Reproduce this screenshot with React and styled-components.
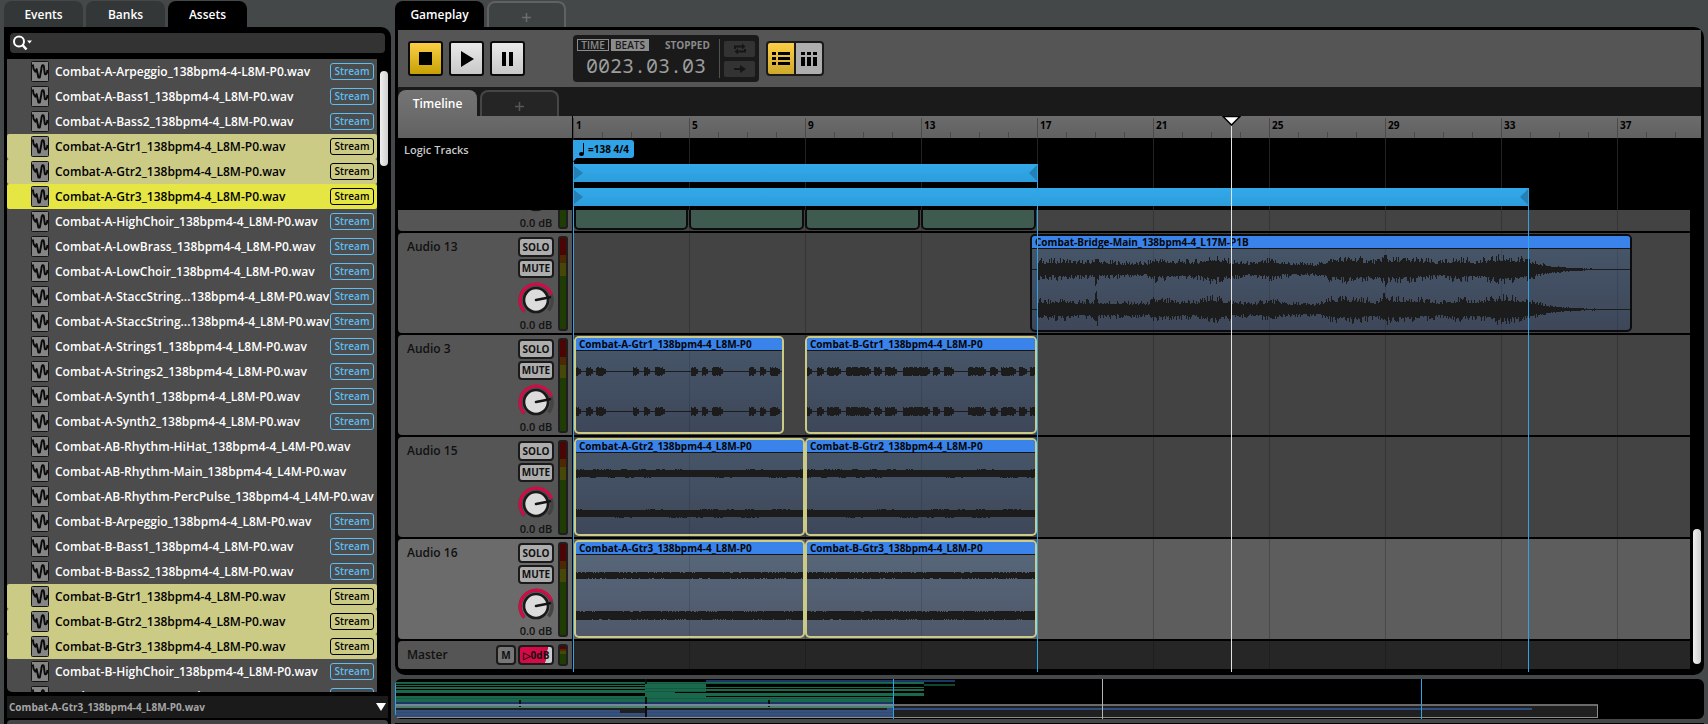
import React, { useState } from 'react';
import styled, { createGlobalStyle, css } from 'styled-components';

const COLORS = {
  frame: '#444848',
  black: '#000',
  panel: '#555',
  dark: '#1a1a1a',
  list: '#4c4c4c',
  lane: '#434343',
  laneSelected: '#5d5d5d',
  blue: '#2fa3e6',
  stream: '#5bbff5',
  clip: '#3a83ea',
  picked: '#cccb85',
  current: '#e5e544',
  red: '#d60a47',
  white: '#fff',
};
const SIZES = {
  small: '10px',
  medium: '11px',
  large: '12px',
};
const BAR = 29;
const FONT = `'Open Sans', 'Noto Sans', sans-serif`;

const GlobalStyle = createGlobalStyle`
  * {
    box-sizing: border-box;
  }
  body {
    margin: 0;
    background: ${COLORS.frame};
    font-family: ${FONT};
    font-size: ${SIZES.large};
    font-weight: 700;
  }
  button, input {
    font: inherit;
    margin: 0;
    padding: 0;
  }
`;

const Window = styled.div`
  display: flex;
  gap: 4px;
  height: 100vh;
  padding: 0 4px;
  overflow: hidden;
`;
const Column = styled.div`
  display: flex;
  flex-direction: column;
  min-width: 0;
  ${(props) => (props.$side ? 'flex: 0 0 387px;' : 'flex: 1;')}
`;
const TabBar = styled.div`
  display: flex;
  flex: none;
  gap: 3px;
  padding-top: ${(props) => (props.$inner ? '3px' : '1px')};
  background: ${(props) => (props.$inner ? COLORS.dark : 'transparent')};
`;
const Tab = styled.button`
  width: ${(props) => (props.$wide ? '89px' : '79px')};
  height: 26px;
  border: 0;
  border-radius: 8px 8px 0 0;
  color: ${COLORS.white};
  font-size: ${SIZES.large};
  font-weight: 600;
  background: ${(props) => (props.$active ? COLORS.black : '#333737')};
  ${(props) =>
    props.$inner &&
    css`
      background: linear-gradient(#747474, #6b6b6b);
    `}
`;
const AddTab = styled.button`
  width: 79px;
  height: 26px;
  border: 2px solid ${(props) => (props.$inner ? '#464646' : '#606161')};
  border-bottom: 0;
  border-radius: 8px 8px 0 0;
  background: ${(props) => (props.$inner ? '#252525' : '#3e4242')};
  svg {
    display: block;
    margin: 4px auto 0;
  }
`;

/* asset browser */
const Browser = styled.div`
  display: flex;
  flex-direction: column;
  flex: 1;
  min-height: 0;
  padding: 6px 3px 0;
  background: ${COLORS.black};
  border-radius: 0 10px 0 0;
`;
const Search = styled.label`
  display: flex;
  align-items: center;
  flex: none;
  height: 20px;
  margin: 0 3px 6px;
  padding-left: 3px;
  background: #333;
  border-radius: 4px;
  input {
    flex: 1;
    border: 0;
    outline: 0;
    background: none;
    color: ${COLORS.white};
  }
`;
const ListArea = styled.div`
  display: flex;
  gap: 3px;
  flex: 1;
  min-height: 0;
`;
const AssetList = styled.ul`
  flex: 1;
  margin: 0;
  padding: 0;
  list-style: none;
  overflow: hidden;
  background: ${COLORS.list};
  border-radius: 0 0 0 5px;
`;
const Asset = styled.li`
  display: flex;
  align-items: center;
  height: 25px;
  padding: 0 3px 0 24px;
  color: ${(props) => (props.$state ? COLORS.black : COLORS.white)};
  background: ${(props) => (props.$state ? COLORS[props.$state] : 'transparent')};
  border-radius: 2px;
  font-weight: 600;
  svg {
    flex: none;
  }
`;
const AssetName = styled.span`
  flex: 1;
  margin-left: 6px;
  white-space: nowrap;
`;
const Stream = styled.span`
  flex: none;
  width: 44px;
  height: 17px;
  border: 1px solid;
  border-radius: 3px;
  color: ${(props) => (props.$state ? COLORS.black : COLORS.stream)};
  font-size: ${SIZES.small};
  line-height: 15px;
  text-align: center;
`;
const ScrollTrack = styled.div`
  display: flex;
  flex-direction: column;
  flex: none;
  width: 8px;
  padding-top: 12px;
  ${(props) =>
    props.$end &&
    css`
      justify-content: flex-end;
      padding: 0 0 5px;
    `}
`;
const Thumb = styled.div`
  width: 8px;
  height: ${(props) => props.$size};
  border-radius: 4px;
  background: linear-gradient(90deg, #f0f0f0, #cfcfcf);
`;
const Preview = styled.div`
  display: flex;
  align-items: center;
  justify-content: space-between;
  flex: none;
  height: 22px;
  margin-top: 4px;
  padding: 0 2px;
  background: ${COLORS.dark};
  color: #a5a5a5;
  font-size: ${SIZES.small};
`;
const NextPanel = styled.div`
  flex: none;
  height: 4px;
  margin-top: 2px;
  background: #444;
  border-radius: 4px 4px 0 0;
`;

/* editor */
const Editor = styled.div`
  display: flex;
  flex-direction: column;
  flex: 1;
  min-height: 0;
  padding: 3px 3px 0;
  background: ${COLORS.black};
  border-radius: 0 10px 10px 10px;
`;
const Toolbar = styled.div`
  display: flex;
  align-items: center;
  flex: none;
  height: 57px;
  padding: 0 10px;
  background: ${COLORS.panel};
`;
const Group = styled.div`
  display: flex;
  gap: ${(props) => props.$gap || '0'};
`;
const TransportButton = styled.button`
  display: grid;
  place-items: center;
  width: 35px;
  height: 35px;
  border: 2px solid #0b0b0b;
  border-radius: 3px;
  background: ${(props) =>
    props.$on ? 'linear-gradient(#fdce45, #c6a104)' : 'linear-gradient(#e9e9e9, #c8c8c8)'};
`;
const Display = styled.div`
  display: flex;
  height: 47px;
  margin: 0 7px 0 48px;
  padding: 4px;
  background: ${COLORS.dark};
  border-radius: 4px;
`;
const Clock = styled.div`
  width: 143px;
  border-right: 1px solid #505050;
`;
const Modes = styled.div`
  display: flex;
  align-items: center;
  gap: 2px;
  height: 12px;
  color: #8b8b8b;
  font-size: ${SIZES.small};
  line-height: 10px;
  span {
    margin-left: 14px;
  }
`;
const Mode = styled.button`
  width: ${(props) => (props.$on ? '38px' : '32px')};
  height: 12px;
  border: 1px solid #8b8b8b;
  color: ${(props) => (props.$on ? COLORS.dark : '#8b8b8b')};
  background: ${(props) => (props.$on ? '#8b8b8b' : 'transparent')};
  font-weight: 600;
  line-height: 10px;
`;
const Position = styled.output`
  display: block;
  margin-top: 2px;
  padding-left: 9px;
  color: #9c9c9c;
  font-family: 'Noto Sans Mono', 'Droid Sans Mono', 'DejaVu Sans Mono', monospace;
  font-size: 20px;
  font-weight: 400;
  line-height: 26px;
`;
const SmallButtons = styled.div`
  display: flex;
  flex-direction: column;
  justify-content: center;
  gap: 4px;
  margin-left: 4px;
`;
const SmallButton = styled.button`
  display: grid;
  place-items: center;
  width: 31px;
  height: 16px;
  border: 0;
  border-radius: 2px;
  background: #333;
`;
const ViewButton = styled.button`
  display: grid;
  place-items: center;
  width: 29px;
  height: 35px;
  border: 2px solid ${COLORS.dark};
  border-radius: ${(props) => (props.$on ? '4px 0 0 4px' : '0 4px 4px 0')};
  border-left-width: ${(props) => (props.$on ? '2px' : '1px')};
  border-right-width: ${(props) => (props.$on ? '1px' : '2px')};
  background: ${(props) => (props.$on ? 'linear-gradient(#fdce45, #cfa92c)' : '#aeaeae')};
`;

/* timeline */
const Timeline = styled.div`
  position: relative;
  display: flex;
  flex-direction: column;
  flex: 1;
  min-height: 0;
  padding-bottom: 6px;
`;
const Row = styled.div`
  display: flex;
  flex: none;
  gap: 1px;
  height: ${(props) => props.$height};
`;
const grid = (color) => css`
  background-image: repeating-linear-gradient(
    90deg,
    ${color} 0,
    ${color} 1px,
    transparent 1px,
    transparent ${BAR * 4}px
  );
`;
const Ruler = styled.div`
  display: flex;
  flex: 1;
  min-width: 0;
  overflow: hidden;
  background: linear-gradient(#6c6c6c, #616161);
`;
const RulerHead = styled.div`
  flex: 0 0 174px;
  background: linear-gradient(#6b6b6b, #616161);
`;
const RulerMark = styled.div`
  flex: none;
  width: ${BAR * 4}px;
  margin-top: 2px;
  padding-left: 2px;
  border-left: 1px solid #4a4a4a;
  color: ${COLORS.black};
  font-size: ${SIZES.small};
  line-height: 15px;
  background: repeating-linear-gradient(
      90deg,
      transparent 0,
      transparent 28px,
      #4a4a4a 28px,
      #4a4a4a 29px
    )
    bottom / 100% 6px no-repeat;
`;
const LogicHead = styled.div`
  flex: 0 0 174px;
  padding: 4px 6px;
  color: #c9c9c9;
  font-size: ${SIZES.medium};
  font-weight: 600;
  line-height: 15px;
`;
const LogicLane = styled.div`
  flex: 1;
  min-width: 0;
  padding-top: 2px;
  overflow: hidden;
  ${grid('#222')}
`;
const Tempo = styled.div`
  display: flex;
  align-items: center;
  gap: 3px;
  width: 61px;
  height: 18px;
  padding-left: 6px;
  border-radius: 0 3px 3px 0;
  background: ${COLORS.blue};
  color: ${COLORS.black};
  font-size: ${SIZES.small};
  white-space: nowrap;
`;
const TempoTail = styled.div`
  width: 5px;
  height: 6px;
  background: linear-gradient(135deg, ${COLORS.blue} 2px, transparent 3px);
`;
const LoopRegion = styled.div`
  display: flex;
  justify-content: space-between;
  width: ${(props) => props.$bars * BAR}px;
  height: 18px;
  margin: 0 0 6px 1px;
  background: linear-gradient(#33a9ea, #2b9ddc);
  svg {
    display: block;
  }
`;
const Tracks = styled.div`
  display: flex;
  flex-direction: column;
  justify-content: flex-end;
  flex: 1;
  gap: 2px;
  min-height: 0;
  padding-bottom: 2px;
  overflow: hidden;
`;
const TracksAndMaster = styled.div`
  display: flex;
  flex-direction: column;
  flex: 1;
  min-width: 0;
`;
const Body = styled.div`
  display: flex;
  flex: 1;
  gap: 3px;
  min-height: 0;
`;
const TrackHead = styled.div`
  display: flex;
  flex: 0 0 174px;
  padding: 3px 4px 2px 9px;
  border-radius: 4px 0 0 4px;
  color: #111;
  background: ${(props) => (props.$selected ? '#6b6b6b' : COLORS.panel)};
`;
const TrackName = styled.div`
  flex: 1;
  font-weight: 600;
  line-height: 22px;
`;
const Strip = styled.div`
  display: flex;
  flex-direction: column;
  align-items: center;
  gap: 2px;
  width: 36px;
  margin: 1px 4px 0 0;
`;
const ChannelButton = styled.button`
  width: ${(props) => (props.$mini ? '20px' : '36px')};
  height: 20px;
  border: 2px solid ${COLORS.dark};
  border-radius: 4px;
  color: #111;
  background: ${(props) => (props.$mini ? '#777' : '#adadad')};
  font-size: ${SIZES.small};
  line-height: 14px;
`;
const KnobWrap = styled.label`
  position: relative;
  display: block;
  height: 36px;
  input {
    position: absolute;
    inset: 0;
    width: 100%;
    height: 100%;
    opacity: 0;
  }
  svg {
    display: block;
  }
`;
const Level = styled.div`
  font-size: ${SIZES.medium};
  font-weight: 600;
  line-height: 13px;
  white-space: nowrap;
`;
const Meter = styled.div`
  width: 10px;
  border: 2px solid #1f1f1f;
  border-radius: 3px;
  background: linear-gradient(
    #4b0505 0 19%,
    #4d2805 19% 27%,
    #46480a 27% 42%,
    #1f3c05 42%
  );
`;
const Lane = styled.div`
  position: relative;
  flex: 1;
  min-width: 0;
  overflow: hidden;
  background-color: ${(props) => props.$color || COLORS.lane};
  ${grid('rgba(0, 0, 0, 0.22)')}
`;
const ClipBox = styled.div`
  position: absolute;
  top: 1px;
  bottom: 1px;
  display: flex;
  flex-direction: column;
  border: 2px solid ${(props) => (props.$picked ? COLORS.picked : '#0c0c0f')};
  border-radius: 5px;
  overflow: hidden;
  background: linear-gradient(rgba(81, 124, 181, 0.35), rgba(50, 79, 130, 0.35));
  ${(props) =>
    props.$green &&
    css`
      background: #3f5b50;
    `}
`;
const ClipName = styled.div`
  flex: none;
  height: 13px;
  padding-left: 3px;
  border-bottom: 1px solid #151515;
  background: ${(props) => (props.$green ? '#2f8a67' : COLORS.clip)};
  color: #050505;
  font-size: ${SIZES.small};
  line-height: 12px;
  white-space: nowrap;
`;
const WaveSvg = styled.svg`
  display: block;
  width: 100%;
  height: 81px;
`;
const MasterHead = styled(TrackHead)`
  align-items: center;
  gap: 2px;
  padding: 0 4px 0 9px;
  ${Meter} {
    height: 22px;
    margin-left: 2px;
  }
`;
const Fader = styled.label`
  position: relative;
  width: 36px;
  height: 20px;
  border: 2px solid ${COLORS.dark};
  border-radius: 4px;
  background: linear-gradient(100deg, ${COLORS.red} 80%, #ccc 81%);
  font-size: ${SIZES.small};
  line-height: 16px;
  text-align: center;
  white-space: nowrap;
  input {
    position: absolute;
    inset: 0;
    width: 100%;
    opacity: 0;
  }
`;
/* vertical markers lie over every lane */
const Marker = styled.div`
  position: absolute;
  top: ${(props) => props.$top};
  bottom: 3px;
  left: ${(props) => 175 + Math.round((props.$bar - 1) * BAR)}px;
  width: 1px;
  background: ${(props) => props.$color};
  pointer-events: none;
  svg {
    display: block;
    margin-left: -9px;
  }
`;

const Overview = styled.div`
  flex: none;
  height: 40px;
  margin: 4px 0;
  overflow: hidden;
  border-radius: 6px;
  background: ${COLORS.black};
  svg {
    display: block;
    width: 100%;
    height: 40px;
  }
`;
const NextEdge = styled.div`
  flex: none;
  height: 1px;
  background: ${COLORS.black};
`;

const suffix = '_138bpm4-4_L8M-P0.wav';
const assets = [
  { name: 'Combat-A-Arpeggio_138bpm4-4-L8M-P0.wav' },
  { name: `Combat-A-Bass1${suffix}` },
  { name: `Combat-A-Bass2${suffix}` },
  { name: `Combat-A-Gtr1${suffix}`, state: 'picked' },
  { name: `Combat-A-Gtr2${suffix}`, state: 'picked' },
  { name: `Combat-A-Gtr3${suffix}`, state: 'current' },
  { name: `Combat-A-HighChoir${suffix}` },
  { name: `Combat-A-LowBrass${suffix}` },
  { name: `Combat-A-LowChoir${suffix}` },
  { name: 'Combat-A-StaccString...138bpm4-4_L8M-P0.wav' },
  { name: 'Combat-A-StaccString...138bpm4-4_L8M-P0.wav' },
  { name: `Combat-A-Strings1${suffix}` },
  { name: `Combat-A-Strings2${suffix}` },
  { name: `Combat-A-Synth1${suffix}` },
  { name: `Combat-A-Synth2${suffix}` },
  { name: 'Combat-AB-Rhythm-HiHat_138bpm4-4_L4M-P0.wav', memory: true },
  { name: 'Combat-AB-Rhythm-Main_138bpm4-4_L4M-P0.wav', memory: true },
  { name: 'Combat-AB-Rhythm-PercPulse_138bpm4-4_L4M-P0.wav', memory: true },
  { name: `Combat-B-Arpeggio${suffix}` },
  { name: `Combat-B-Bass1${suffix}` },
  { name: `Combat-B-Bass2${suffix}` },
  { name: `Combat-B-Gtr1${suffix}`, state: 'picked' },
  { name: `Combat-B-Gtr2${suffix}`, state: 'picked' },
  { name: `Combat-B-Gtr3${suffix}`, state: 'picked' },
  { name: `Combat-B-HighChoir${suffix}` },
  { name: `Combat-B-LowBrass${suffix}` },
];

const burstsA = [
  [0, 4], [10, 16], [20, 29], [57, 62], [68, 73], [79, 88],
  [115, 121], [126, 131], [136, 146], [173, 179], [184, 189], [194, 203],
];
const burstsB = [
  [0, 4], [10, 16], [20, 33], [39, 63], [67, 74], [78, 89], [96, 122],
  [126, 132], [137, 146], [161, 178], [183, 190], [194, 208], [212, 219], [223, 229],
];
const bridge = [
  [0, 9], [10, 8], [30, 9], [40, 7], [56, 8], [59, 15], [62, 7], [75, 7], [110, 6],
  [116, 10], [135, 8], [160, 8], [176, 12], [188, 9], [200, 7], [215, 6], [232, 9],
  [250, 6], [280, 5], [294, 10], [315, 11], [340, 8], [349, 15], [351, 10], [380, 10],
  [400, 7], [420, 10], [440, 8], [464, 12], [485, 10], [500, 6], [515, 3], [535, 1],
  [550, 0.5], [590, 0],
];

const tracks = [
  {
    name: 'Audio 14',
    clips: [1, 5, 9, 13].map((bar) => ({
      name: 'Combat-Drums', start: bar, bars: 3.96, green: true, wave: 'none',
    })),
  },
  {
    name: 'Audio 13',
    clips: [{ name: 'Combat-Bridge-Main_138bpm4-4_L17M-P1B', start: 16.76, bars: 20.76, wave: 'bridge' }],
  },
  {
    name: 'Audio 3',
    clips: [
      { name: 'Combat-A-Gtr1_138bpm4-4_L8M-P0', start: 1, bars: 7.27, wave: 'burstsA', picked: true },
      { name: 'Combat-B-Gtr1_138bpm4-4_L8M-P0', start: 9, bars: 8, wave: 'burstsB', picked: true },
    ],
  },
  {
    name: 'Audio 15',
    clips: [
      { name: 'Combat-A-Gtr2_138bpm4-4_L8M-P0', start: 1, bars: 8, wave: 'rough', picked: true },
      { name: 'Combat-B-Gtr2_138bpm4-4_L8M-P0', start: 9, bars: 8, wave: 'rough', picked: true },
    ],
  },
  {
    name: 'Audio 16',
    selected: true,
    clips: [
      { name: 'Combat-A-Gtr3_138bpm4-4_L8M-P0', start: 1, bars: 8, wave: 'flat', picked: true },
      { name: 'Combat-B-Gtr3_138bpm4-4_L8M-P0', start: 9, bars: 8, wave: 'flat', picked: true },
    ],
  },
];

const noise = (n) => {
  const v = Math.sin(n * 12.9898) * 43758.5453;
  return v - Math.floor(v);
};

const envelope = (points, x) => {
  const i = points.findIndex((p) => p[0] >= x);
  if (i <= 0) return i === 0 ? points[0][1] : 0;
  const [x0, y0] = points[i - 1];
  const [x1, y1] = points[i];
  return y0 + ((y1 - y0) * (x - x0)) / (x1 - x0);
};

const level = (wave, x, seed) => {
  const r = noise(x + seed);
  if (wave === 'bridge') {
    if (x < 5) return 0;
    return envelope(bridge, x - 5) * (0.65 + r * r * 0.65);
  }
  if (wave === 'rough') {
    const swell = noise(Math.floor((x + seed) / 9));
    return swell > 0.6 && r > 0.4 ? 4 : 3;
  }
  if (wave === 'flat') return (seed > 150 ? 4 : 3) - (r > 0.85 ? 1 : 0);
  const list = wave === 'burstsA' ? burstsA : burstsB;
  const burst = list.find(([a, b]) => x >= a && x <= b);
  if (!burst) return 0;
  return x > burst[1] - 2 ? 2 : 3 + r * 1.5;
};

const Waveform = ({ wave, width }) => {
  const channel = (center, seed) => {
    let d = '';
    for (let x = 0; x < width; x += 1) {
      const up = Math.round(level(wave, x, seed));
      const down = Math.round(level(wave, x, seed + 31));
      if (up + down > 0) d += `M${x} ${center - up}h1V${center + 1 + down}h-1z`;
    }
    return d;
  };
  return (
    <WaveSvg viewBox={`0 0 ${width} 81`} preserveAspectRatio="none" shapeRendering="crispEdges">
      <path d={`M0 20h${width}v1H0zM0 60h${width}v1H0z`} fill="#1c1c1c" />
      <path d={channel(20, 100)} fill="#1c1c1c" />
      <path d={channel(60, 200)} fill="#1c1c1c" />
    </WaveSvg>
  );
};

const Clip = ({ clip }) => {
  /* the first bar line stays visible, so a clip on it starts a pixel later */
  const inset = clip.start === 1 ? 1 : 0;
  const width = Math.round(clip.bars * BAR) - inset;
  return (
    <ClipBox
      $picked={clip.picked}
      $green={clip.green}
      style={{ left: Math.round((clip.start - 1) * BAR) + inset, width }}
    >
      <ClipName $green={clip.green}>{clip.name}</ClipName>
      {clip.wave !== 'none' && <Waveform wave={clip.wave} width={width - 4} />}
    </ClipBox>
  );
};

const Plus = ({ color }) => (
  <svg width="9" height="9" viewBox="0 0 9 9">
    <path d="M4.5 0v9M0 4.5h9" stroke={color} strokeWidth="1.5" />
  </svg>
);

const WaveIcon = () => (
  <svg width="18" height="21" viewBox="0 0 18 21">
    <rect x="0.5" y="0.5" width="17" height="20" rx="1" fill="#858585" stroke="#141414" />
    <path
      d="M1.8 3.5L2.6 8L4.4 10.8L5.6 8L7.4 16.5H8.8L10.4 8C10.6 3.5 12.8 3 13 6.500L13.8 13C15 14 16 12.500 16.500 9"
      fill="none"
      stroke="#0a0a0a"
      strokeWidth="1.9"
      strokeLinejoin="round"
    />
  </svg>
);

const Knob = ({ label }) => (
  <KnobWrap>
    <input type="range" min="-80" max="10" defaultValue="0" aria-label={label} />
    <svg width="36" height="36" viewBox="0 -1 36 36">
      <path d="M6.5 30.5A16 16 0 1 1 30.5 29.5" fill="none" stroke="#444" strokeWidth="3.5" />
      <path d="M6.2 30.2A16.3 16.3 0 1 1 33.6 13.5" fill="none" stroke={COLORS.red} strokeWidth="3" />
      <circle cx="18" cy="19" r="12" fill="#dcdcdc" stroke="#1a1a1a" strokeWidth="2.6" />
      <path d="M18 19L32 16.3" stroke="#151515" strokeWidth="2.6" strokeLinecap="round" />
    </svg>
  </KnobWrap>
);

const Track = ({ track }) => (
  <Row $height="100px">
    <TrackHead $selected={track.selected}>
      <TrackName>{track.name}</TrackName>
      <Strip>
        <ChannelButton>SOLO</ChannelButton>
        <ChannelButton>MUTE</ChannelButton>
        <Knob label={`${track.name} volume`} />
        <Level>0.0 dB</Level>
      </Strip>
      <Meter />
    </TrackHead>
    <Lane $color={track.selected ? COLORS.laneSelected : COLORS.lane}>
      {track.clips.map((clip) => (
        <Clip key={clip.name + clip.start} clip={clip} />
      ))}
    </Lane>
  </Row>
);

const Loop = ({ bars }) => (
  <LoopRegion $bars={bars}>
    <svg width="9" height="18">
      <path d="M0 2L9 9L0 16z" fill="#2480b5" />
    </svg>
    <svg width="10" height="18">
      <path d="M10 0L1 9L10 18z" fill="#2480b5" />
    </svg>
  </LoopRegion>
);

const OverviewMap = () => (
  <svg viewBox="0 0 1309 40" preserveAspectRatio="none" shapeRendering="crispEdges">
    <g fill="#1b3564">
      <path d="M0 0H311V3H560V1H311V0z" />
      <rect y="23" width="498" height="2" />
    </g>
    <g fill="#1a694c">
      <path d="M0 3H529V5H0zM0 6H251V7H0zM0 8H251V10H0zM0 11H251V14H0zM0 17H251V23H0z" />
      <path d="M250 5H311V23H250zM311 8H529V9H311zM311 10H529V12H311zM311 14H529V17H311zM311 18H498V23H311z" />
      <path d="M311 5H560V7H529V5z" fill="#10452f" />
    </g>
    <g fill="#145a42">
      <path d="M0 4H498V5H0zM250 9H311V10H250zM0 19H498V20H0zM250 12H311V13H250z" />
    </g>
    <rect x="280" y="13" width="31" height="1" fill="#000" />
    <rect y="25" width="1203" height="14" fill="#202020" />
    <rect y="27" width="498" height="2" fill="#488268" />
    <rect y="31" width="498" height="8" fill="#35527f" />
    <path d="M0 33H498M0 36H498" stroke="#304a74" />
    <rect x="492" y="29" width="645" height="2" fill="#2f4d7e" />
    <path d="M225 31H251V34H225z" fill="#202020" />
    <path d="M124 21h2v7h-2zM250 0h2v5h-2zM250 18h2v21h-2zM373 21h2v7h-2z" fill="#0a0f0d" />
    <rect y="25" width="1203" height="2" fill="#6b6b6b" />
    <rect y="25" width="498" height="2" fill="#76869a" />
    <path d="M0 38.5H1202.5V26" fill="none" stroke="#8c8c8c" />
    <path d="M0 0h1v39h-1zM498 0h1v40h-1zM1026 0h1v40h-1z" fill={COLORS.blue} />
    <rect x="707" width="1" height="40" fill="#b5b5b5" />
  </svg>
);

const App = () => {
  const [query, setQuery] = useState('');
  const bars = [1, 5, 9, 13, 17, 21, 25, 29, 33, 37];

  return (
    <>
      <GlobalStyle />
      <Window>
        <Column $side>
          <TabBar>
            <Tab>Events</Tab>
            <Tab>Banks</Tab>
            <Tab $active>Assets</Tab>
          </TabBar>
          <Browser>
            <Search>
              <svg width="22" height="16" viewBox="0 0 22 16">
                <circle cx="6" cy="6.5" r="5" fill="none" stroke="#fff" strokeWidth="2" />
                <path d="M9.5 10L13.5 14.5" stroke="#fff" strokeWidth="2.6" />
                <path d="M14 5.5h5l-2.5 3z" fill="#fff" />
              </svg>
              <input
                type="text"
                aria-label="Search assets"
                value={query}
                onChange={(e) => setQuery(e.target.value)}
              />
            </Search>
            <ListArea>
              <AssetList>
                {assets.map((asset, i) => (
                  <Asset key={i} $state={asset.state}>
                    <WaveIcon />
                    <AssetName>{asset.name}</AssetName>
                    {!asset.memory && <Stream $state={asset.state}>Stream</Stream>}
                  </Asset>
                ))}
              </AssetList>
              <ScrollTrack>
                <Thumb $size="95px" />
              </ScrollTrack>
            </ListArea>
            <Preview>
              Combat-A-Gtr3_138bpm4-4_L8M-P0.wav
              <svg width="10" height="8">
                <path d="M0 0h10L5 8z" fill="#fff" />
              </svg>
            </Preview>
            <NextPanel />
          </Browser>
        </Column>

        <Column>
          <TabBar>
            <Tab $active $wide>
              Gameplay
            </Tab>
            <AddTab aria-label="New event tab">
              <Plus color="#6c6d6d" />
            </AddTab>
          </TabBar>
          <Editor>
            <Toolbar>
              <Group $gap="6px">
                <TransportButton $on aria-label="Stop">
                  <svg width="13" height="13">
                    <rect width="13" height="13" />
                  </svg>
                </TransportButton>
                <TransportButton aria-label="Play">
                  <svg width="14" height="16">
                    <path d="M1 0L14 8L1 16z" />
                  </svg>
                </TransportButton>
                <TransportButton aria-label="Pause">
                  <svg width="12" height="14">
                    <path d="M0 0h4v14H0zM7 0h4v14H7z" />
                  </svg>
                </TransportButton>
              </Group>
              <Display>
                <Clock>
                  <Modes>
                    <Mode>TIME</Mode>
                    <Mode $on>BEATS</Mode>
                    <span>STOPPED</span>
                  </Modes>
                  <Position>0023.03.03</Position>
                </Clock>
                <SmallButtons>
                  <SmallButton aria-label="Loop playback">
                    <svg width="12" height="12" viewBox="0 0 12 12" fill="none" stroke="#161616" strokeWidth="2">
                      <path d="M1 6V3.5H9M11 6V8.5H3" />
                      <path d="M8 0.5l3.5 3l-3.5 3zM4 5.5l-3.5 3l3.5 3z" fill="#161616" stroke="none" />
                    </svg>
                  </SmallButton>
                  <SmallButton aria-label="Follow playback">
                    <svg width="12" height="8" viewBox="0 0 12 8">
                      <path d="M0 3h6V0l6 4l-6 4V5H0z" fill="#161616" />
                    </svg>
                  </SmallButton>
                </SmallButtons>
              </Display>
              <Group>
                <ViewButton $on aria-label="Timeline view">
                  <svg width="18" height="13">
                    <path d="M0 0h4v3H0zM6 0h12v3H6zM0 5h4v3H0zM6 5h12v3H6zM0 10h4v3H0zM6 10h12v3H6z" />
                  </svg>
                </ViewButton>
                <ViewButton aria-label="Mixer view">
                  <svg width="16" height="14">
                    <path d="M0 0h4v3H0zM0 5h4v9H0zM6 0h4v3H6zM6 5h4v9H6zM12 0h4v3h-4zM12 5h4v9h-4z" />
                  </svg>
                </ViewButton>
              </Group>
            </Toolbar>
            <TabBar $inner>
              <Tab $inner>Timeline</Tab>
              <AddTab $inner aria-label="New sheet">
                <Plus color="#575757" />
              </AddTab>
            </TabBar>
            <Timeline>
              <Row $height="22px">
                <RulerHead />
                <Ruler>
                  {bars.map((bar) => (
                    <RulerMark key={bar}>{bar}</RulerMark>
                  ))}
                </Ruler>
              </Row>
              <Row $height="72px">
                <LogicHead>Logic Tracks</LogicHead>
                <LogicLane>
                  <Tempo>
                    <svg width="6" height="13" viewBox="0 0 6 13">
                      <ellipse cx="2.5" cy="11" rx="2.5" ry="1.9" />
                      <path d="M4.5 0V11" stroke="#000" />
                    </svg>
                    =138 4/4
                  </Tempo>
                  <TempoTail />
                  <Loop bars={16} />
                  <Loop bars={32.93} />
                </LogicLane>
              </Row>
              <Body>
                <TracksAndMaster>
                  <Tracks>
                    {tracks.map((track) => (
                      <Track key={track.name} track={track} />
                    ))}
                  </Tracks>
                  <Row $height="28px">
                    <MasterHead>
                      <TrackName>Master</TrackName>
                      <ChannelButton $mini aria-label="Mute master">
                        M
                      </ChannelButton>
                      <Fader>
                        <input type="range" min="-80" max="10" defaultValue="0" aria-label="Master volume" />
                        ▷0dB
                      </Fader>
                      <Meter />
                    </MasterHead>
                    <Lane $color="#262626" />
                  </Row>
                </TracksAndMaster>
                <ScrollTrack $end>
                  <Thumb $size="135px" />
                </ScrollTrack>
              </Body>
              <Marker $bar={1} $top="46px" $color={COLORS.blue} />
              <Marker $bar={17} $top="48px" $color={COLORS.blue} />
              <Marker $bar={33.93} $top="72px" $color={COLORS.blue} />
              <Marker $bar={23.69} $top="0" $color="#e2e2e2">
                <svg width="19" height="10">
                  <path d="M1 0.5h17L9.5 9z" fill="#fff" stroke="#000" strokeWidth="1.5" />
                </svg>
              </Marker>
            </Timeline>
          </Editor>
          <Overview>
            <OverviewMap />
          </Overview>
          <NextEdge />
        </Column>
      </Window>
    </>
  );
};

export default App;
